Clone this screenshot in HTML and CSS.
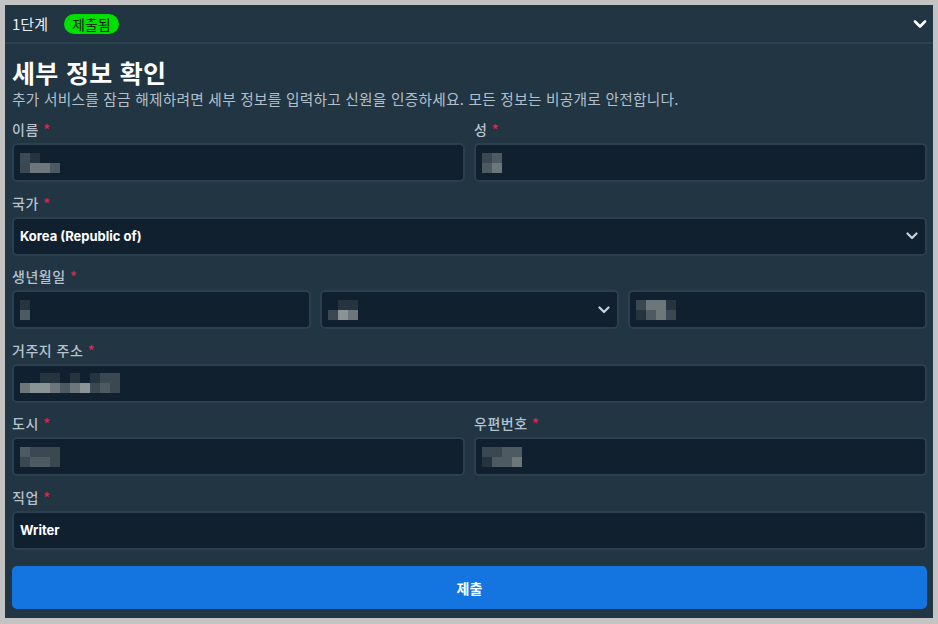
FILE: index.html
```html
<!DOCTYPE html>
<html lang="ko">
<head>
  <meta charset="UTF-8">
  <meta name="viewport" content="width=device-width, initial-scale=1.0">
  <title>세부 정보 확인</title>
  <link rel="stylesheet" href="styles.css">
</head>
<body>
  <div class="panel">
    <div class="step-head">
      <span class="step-name">1단계</span>
      <span class="badge">제출됨</span>
      <svg class="head-chevron" width="14" height="10" viewBox="0 0 14 10"><path d="M2 2.5l5 5 5-5" fill="none" stroke="#fff" stroke-width="2.6" stroke-linecap="round" stroke-linejoin="round"/></svg>
    </div>

    <div class="content">
      <h1>세부 정보 확인</h1>
      <p class="intro">추가 서비스를 잠금 해제하려면 세부 정보를 입력하고 신원을 인증하세요. 모든 정보는 비공개로 안전합니다.</p>

      <div class="row two">
        <div class="field">
          <label>이름 <span class="req">*</span></label>
          <div class="input"><span class="mosaic"><i class="c1"></i><i class="c2"></i><i></i><i></i><i class="c3"></i><i class="c5"></i><i class="c5"></i><i class="c4"></i></span></div>
        </div>
        <div class="field">
          <label>성 <span class="req">*</span></label>
          <div class="input"><span class="mosaic"><i class="c3"></i><i class="c4"></i><i></i><i></i><i class="c4"></i><i class="c5"></i><i></i><i></i></span></div>
        </div>
      </div>

      <div class="field">
        <label>국가 <span class="req">*</span></label>
        <div class="input select"><span class="value">Korea (Republic of)</span>
          <svg class="sel-chevron" width="12" height="8" viewBox="0 0 12 8"><path d="M1.5 1.5l4.5 4.5 4.5-4.5" fill="none" stroke="#c7d1dc" stroke-width="2.2" stroke-linecap="round" stroke-linejoin="round"/></svg>
        </div>
      </div>

      <div class="field">
        <label>생년월일 <span class="req">*</span></label>
        <div class="row three">
          <div class="input"><span class="mosaic narrow"><i class="c2"></i><i class="c4"></i></span></div>
          <div class="input select"><span class="mosaic"><i></i><i class="c2"></i><i class="c2"></i><i></i><i class="c3"></i><i class="c6"></i><i class="c5"></i><i></i></span>
            <svg class="sel-chevron" width="12" height="8" viewBox="0 0 12 8"><path d="M1.5 1.5l4.5 4.5 4.5-4.5" fill="none" stroke="#c7d1dc" stroke-width="2.2" stroke-linecap="round" stroke-linejoin="round"/></svg>
          </div>
          <div class="input"><span class="mosaic"><i class="c3"></i><i class="c5"></i><i class="c5"></i><i class="c2"></i><i class="c2"></i><i class="c4"></i><i class="c5"></i><i class="c3"></i></span></div>
        </div>
      </div>

      <div class="field">
        <label>거주지 주소 <span class="req">*</span></label>
        <div class="input"><span class="mosaic wide"><i></i><i></i><i class="c2"></i><i class="c2"></i><i></i><i class="c2"></i><i></i><i class="c2"></i><i class="c3"></i><i class="c3"></i><i class="c5"></i><i class="c6"></i><i class="c6"></i><i class="c5"></i><i class="c4"></i><i class="c5"></i><i class="c6"></i><i class="c3"></i><i class="c4"></i><i class="c3"></i></span></div>
      </div>

      <div class="row two">
        <div class="field">
          <label>도시 <span class="req">*</span></label>
          <div class="input"><span class="mosaic"><i class="c4"></i><i class="c3"></i><i class="c3"></i><i class="c3"></i><i class="c3"></i><i class="c4"></i><i class="c4"></i><i class="c3"></i></span></div>
        </div>
        <div class="field">
          <label>우편번호 <span class="req">*</span></label>
          <div class="input"><span class="mosaic"><i class="c3"></i><i class="c3"></i><i class="c4"></i><i class="c4"></i><i class="c2"></i><i class="c4"></i><i class="c4"></i><i class="c5"></i></span></div>
        </div>
      </div>

      <div class="field">
        <label>직업 <span class="req">*</span></label>
        <div class="input"><span class="value">Writer</span></div>
      </div>

      <button class="submit">제출</button>
    </div>
  </div>
</body>
</html>
```

FILE: styles.css
```css
body {
  margin: 0;
  padding: 5px 5px 5px 5px;
  background-color: #c3c3c3;
  font-family: "Noto Sans CJK KR", "Noto Sans", sans-serif;
  color: #ffffff;
}
.panel {
  width: 928px;
  background: #213543;
  padding-bottom: 9px;
}
.step-head {
  display: flex;
  align-items: center;
  height: 37px;
  padding: 0 6px 0 7px;
  border-bottom: 2px solid #2c4251;
}
.step-name {
  font-size: 15px;
  color: #e8eef4;
}
.badge {
  margin-left: 16px;
  background: #00e000;
  color: #0a1a0a;
  font-size: 14px;
  line-height: 20px;
  padding: 0 8px;
  border-radius: 10px;
}
.head-chevron {
  margin-left: auto;
}
.content {
  padding: 0 6px 0 7px;
}
h1 {
  margin: 13px 0 0;
  font-size: 25px;
  line-height: 30px;
  font-weight: 700;
  letter-spacing: 0.3px;
}
.intro {
  margin: 1px 0 11px;
  font-size: 14.7px;
  letter-spacing: 0.25px;
  color: #b3c0cc;
}
.row {
  display: flex;
  gap: 9px;
}
.row > * {
  flex: 1;
}
.field {
  margin-bottom: 11.5px;
}
.row .field {
  min-width: 0;
}
label {
  display: block;
  font-size: 14px;
  line-height: 18px;
  font-weight: 500;
  letter-spacing: 0.5px;
  color: #b6c2ce;
  margin-bottom: 5px;
}
.req {
  color: #e3254f;
}
.input {
  box-sizing: border-box;
  height: 39px;
  background: #10202e;
  border: 2px solid #2c3f4e;
  border-radius: 5px;
  display: flex;
  align-items: center;
  padding: 0 6px;
}
.value {
  font-family: "Inter", "Noto Sans", sans-serif;
  font-size: 13px;
  font-weight: 700;
  color: #ffffff;
}
.sel-chevron {
  margin-left: auto;
  margin-right: 1px;
}
.mosaic {
  display: grid;
  grid-template-columns: repeat(4, 10px);
  grid-auto-rows: 10px;
}
.mosaic.narrow {
  grid-template-columns: repeat(1, 10px);
}
.mosaic.wide {
  grid-template-columns: repeat(10, 10px);
}
.mosaic i {
  display: block;
}
.mosaic .c1 { background: #3a4a56; }
.mosaic .c2 { background: #25343f; }
.mosaic .c3 { background: #3b4852; }
.mosaic .c4 { background: #4d5a62; }
.mosaic .c5 { background: #6c767b; }
.mosaic .c6 { background: #8a9396; }
.submit {
  display: block;
  width: 100%;
  height: 43px;
  margin-top: 16.5px;
  border: none;
  border-radius: 5px;
  background: #1475e0;
  color: #ffffff;
  font-family: "Noto Sans CJK KR", sans-serif;
  font-size: 14px;
  font-weight: 700;
  cursor: pointer;
}
```
